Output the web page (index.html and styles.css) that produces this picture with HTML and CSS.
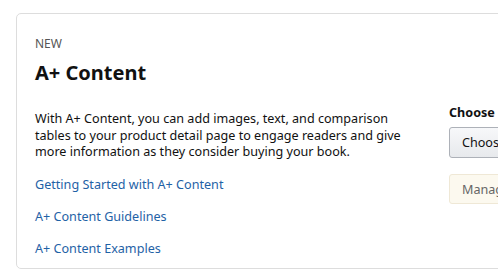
FILE: index.html
```html
<!DOCTYPE html>
<html lang="en">
<head>
    <meta charset="UTF-8">
    <meta name="viewport" content="width=device-width, initial-scale=1.0">
    <title>A+ Content</title>
    <link rel="stylesheet" href="styles.css">
</head>
<body>
    <div class="card">
        <div class="label">NEW</div>
        <h2>A+ Content</h2>
        <div class="row">
            <div class="info">
                <p>With A+ Content, you can add images, text, and comparison tables to your product detail page to engage readers and give more information as they consider buying your book.</p>
                <ul class="links">
                    <li><a href="#">Getting Started with A+ Content</a></li>
                    <li><a href="#">A+ Content Guidelines</a></li>
                    <li><a href="#">A+ Content Examples</a></li>
                </ul>
            </div>
            <div class="actions">
                <div class="actions-title">Choose an option</div>
                <button class="btn">Choose A+ Content</button>
                <button class="btn manage" disabled>Manage A+ Content</button>
            </div>
        </div>
    </div>
</body>
</html>
```

FILE: styles.css
```css
body {
    font-family: 'Noto Sans', Arial, sans-serif;
    font-size: 12.6px;
    color: #111;
    margin: 0;
    padding: 13px 0 0 16px;
    overflow: hidden;
    background: #fff;
}
.card {
    width: 700px;
    height: 256px;
    box-sizing: border-box;
    border: 1px solid #dddddd;
    border-radius: 5px;
    padding: 22px 18px 0 18px;
}
.label {
    color: #555;
    font-size: 12px;
    line-height: 16px;
}
h2 {
    font-size: 20px;
    font-weight: bold;
    margin: 8px 0 0 0;
    line-height: 26px;
}
.row {
    display: flex;
    gap: 44px;
    margin-top: 25px;
}
.info {
    width: 370px;
}
.info p {
    margin: 0;
    line-height: 16.5px;
}
.links {
    list-style: none;
    padding: 0;
    margin: 15px 0 0 0;
}
.links li {
    line-height: 17px;
    margin-bottom: 15px;
}
.links a {
    color: #1f62a6;
    text-decoration: none;
}
.actions {
    display: flex;
    flex-direction: column;
    align-items: flex-start;
    margin-top: -7.5px;
}
.actions-title {
    font-weight: bold;
    line-height: 17px;
    white-space: nowrap;
}
.btn {
    font-family: inherit;
    font-size: 12.6px;
    color: #111;
    height: 31px;
    padding: 0 12px;
    margin-top: 6.5px;
    border: 1px solid #adb1b8;
    border-radius: 3px;
    background: linear-gradient(#f7f8fa, #e7e9ec);
    white-space: nowrap;
}
.manage {
    margin-top: 16px;
    height: 30px;
    color: #666;
    border-color: #efe8d6;
    background: #fcf9ef;
}
```
